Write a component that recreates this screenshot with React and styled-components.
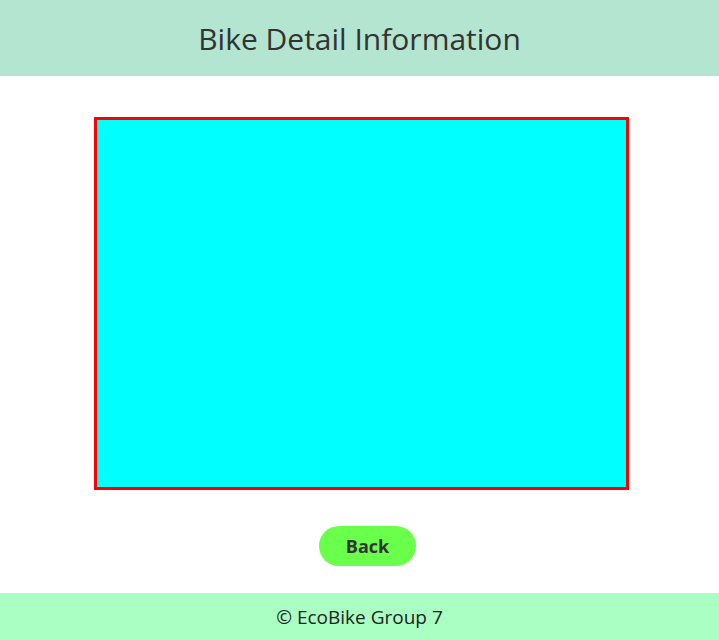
import React from 'react';
import styled, { createGlobalStyle } from 'styled-components';

const GlobalStyle = createGlobalStyle`
  body {
    margin: 0;
    font-family: "Open Sans", "Noto Sans", sans-serif;
    color: #333333;
    background: #ffffff;
  }
`;

const Page = styled.div`
  min-height: 100vh;
  display: flex;
  flex-direction: column;
`;

const Header = styled.header`
  height: 76px;
  background-color: #b3e5d0;
  display: flex;
  align-items: center;
  justify-content: center;
`;

const Title = styled.h1`
  margin: 0;
  font-size: 30px;
  font-weight: 400;
  color: #333333;
`;

const Main = styled.main`
  flex: 1;
  display: flex;
  flex-direction: column;
  align-items: center;
  padding-top: 41px;
`;

const Picture = styled.div`
  width: 529px;
  height: 367px;
  margin-left: 4px;
  background-color: #00ffff;
  border: 3px solid #ff0000;
`;

const BackButton = styled.button`
  margin-top: 36px;
  margin-left: 16px;
  width: 97px;
  height: 40px;
  border: none;
  border-radius: 20px;
  background-color: #6aff4a;
  color: #333333;
  font-family: inherit;
  font-size: 18px;
  font-weight: 700;
  cursor: pointer;
`;

const Footer = styled.footer`
  height: 47px;
  background-color: #aaffc3;
  display: flex;
  align-items: center;
  justify-content: center;
  font-size: 19px;
  color: #222222;
`;

const App = () => {
  return (
    <Page>
      <GlobalStyle />
      <Header>
        <Title>Bike Detail Information</Title>
      </Header>
      <Main>
        <Picture />
        <BackButton>Back</BackButton>
      </Main>
      <Footer>© EcoBike Group 7</Footer>
    </Page>
  );
};

export default App;
